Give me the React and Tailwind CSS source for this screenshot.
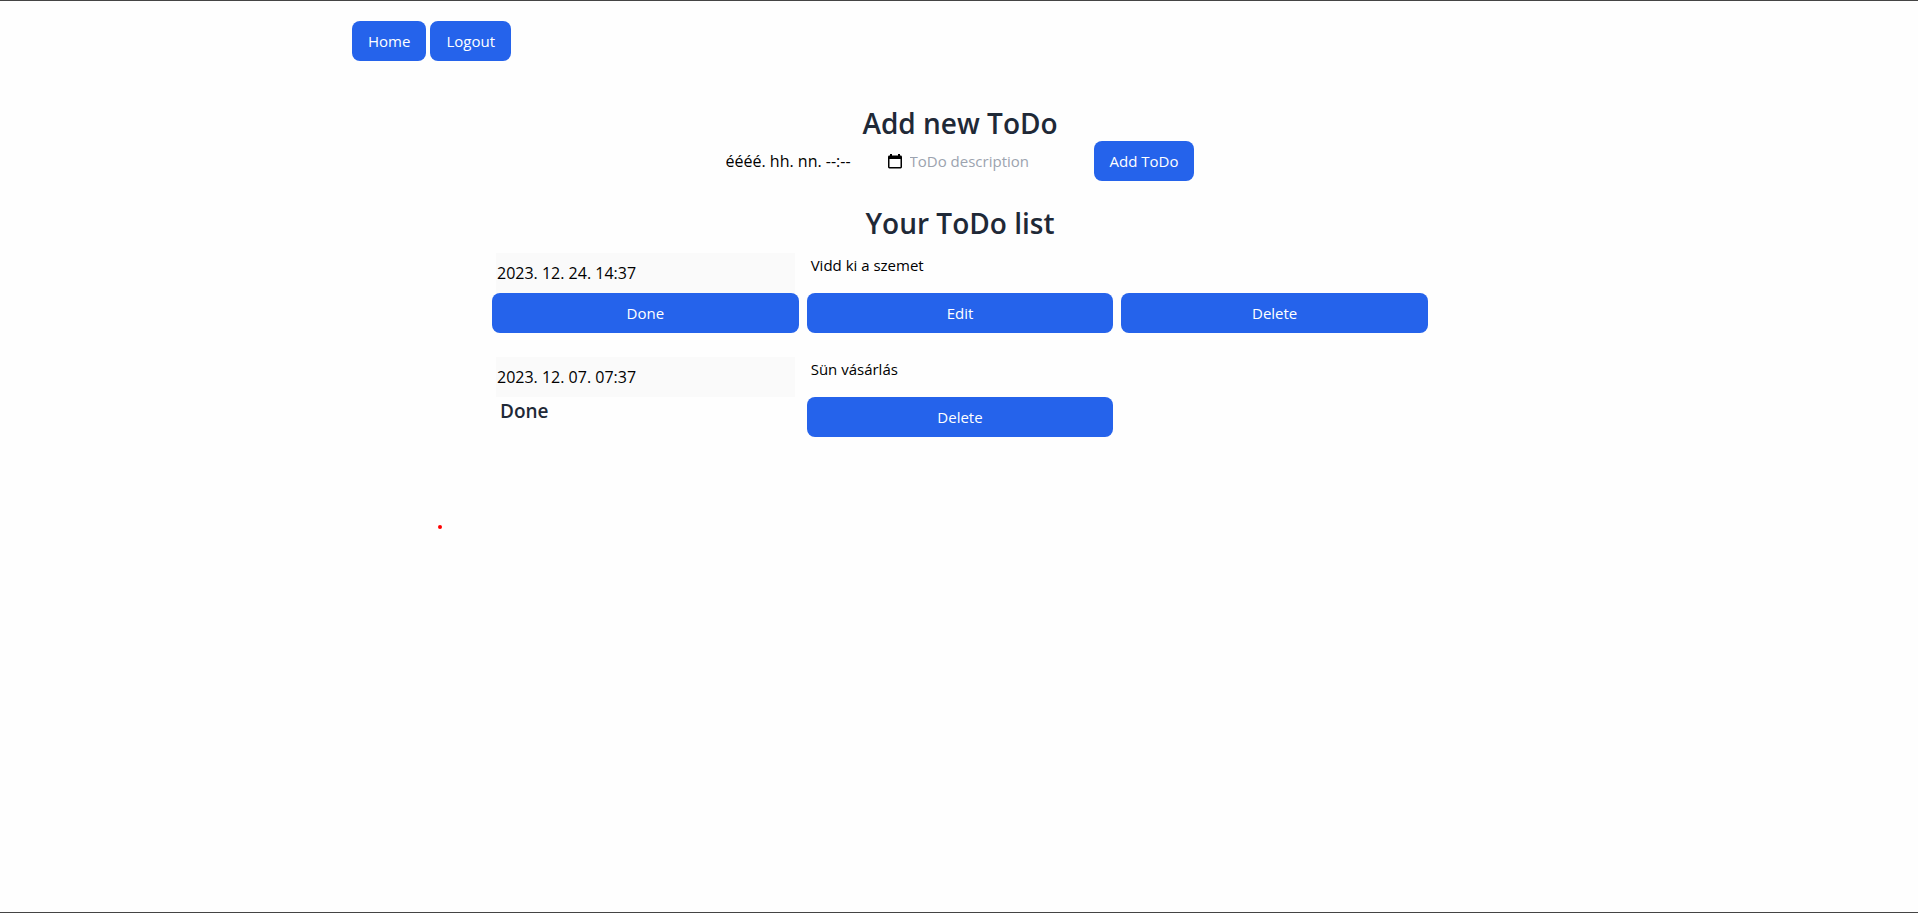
import { useState } from "react";

const todos = [
  { id: 1, date: "2023. 12. 24. 14:37", text: "Vidd ki a szemet", done: false },
  { id: 2, date: "2023. 12. 07. 07:37", text: "Sün vásárlás", done: true },
];

function Button({ children, className = "", ...props }) {
  return (
    <button
      className={"h-10 cursor-pointer rounded-lg bg-[#2563eb] px-4 text-white hover:bg-[#1d4ed8] " + className}
      {...props}
    >
      {children}
    </button>
  );
}

function CalendarIcon() {
  return (
    <svg width="14" height="15" viewBox="0 0 14 15" fill="#000" aria-hidden="true">
      <path
        fillRule="evenodd"
        d="M2 0h2v1.5h6V0h2v1.5h.6A1.4 1.4 0 0 1 14 2.9v10.2a1.4 1.4 0 0 1-1.4 1.4H1.4A1.4 1.4 0 0 1 0 13.1V2.9a1.4 1.4 0 0 1 1.4-1.4H2zM1.5 5v8h11V5z"
      />
    </svg>
  );
}

function SectionTitle({ children }) {
  return <h2 className="text-center text-[28px] leading-9 font-semibold text-[#1f2937]">{children}</h2>;
}

function TodoItem({ todo }) {
  return (
    <li className="grid grid-cols-3 gap-x-2">
      <input
        aria-label="Date"
        className="mx-1 h-10 min-w-0 bg-[#fafafa] px-px text-base text-black"
        value={todo.date}
        disabled
      />
      <p className="px-1 leading-6 text-black">{todo.text}</p>
      <span />
      {todo.done ? (
        <h4 className="px-2 text-[19px] leading-7 font-semibold text-[#1f2937]">Done</h4>
      ) : (
        <>
          <Button>Done</Button>
          <Button>Edit</Button>
        </>
      )}
      <Button>Delete</Button>
    </li>
  );
}

export default function App() {
  const [date, setDate] = useState("");
  const [text, setText] = useState("");
  return (
    <div className="min-h-screen border-y border-[#444] bg-[#fefefe] pl-0.5 font-['Open_Sans','Noto_Sans',sans-serif] text-[15px] leading-6">
      <div className="mx-auto max-w-7xl px-8 pt-5">
        <nav className="flex gap-1">
          <Button>Home</Button>
          <Button>Logout</Button>
        </nav>
        <main className="mx-auto mt-11 max-w-[936px]">
          <SectionTitle>Add new ToDo</SectionTitle>
          <form className="flex items-center justify-center" onSubmit={(e) => e.preventDefault()}>
            <label className="flex w-46 items-center pr-2">
              <input
                aria-label="ToDo date"
                className="h-10 min-w-0 flex-1 bg-transparent text-base outline-none placeholder:text-black"
                placeholder="éééé. hh. nn. --:--"
                value={date}
                onChange={(e) => setDate(e.target.value)}
              />
              <CalendarIcon />
            </label>
            <input
              aria-label="ToDo description"
              className="h-10 w-46 bg-transparent outline-none placeholder:text-[#9ca3af]"
              placeholder="ToDo description"
              value={text}
              onChange={(e) => setText(e.target.value)}
            />
            <Button type="submit">Add ToDo</Button>
          </form>
          <div className="mt-6">
            <SectionTitle>Your ToDo list</SectionTitle>
          </div>
          <ul className="mt-3 flex flex-col gap-6">
            {todos.map((todo) => (
              <TodoItem key={todo.id} todo={todo} />
            ))}
          </ul>
        </main>
        <div className="mt-22 ml-[86px] size-1 rounded-full bg-[#f00]" />
      </div>
    </div>
  );
}
